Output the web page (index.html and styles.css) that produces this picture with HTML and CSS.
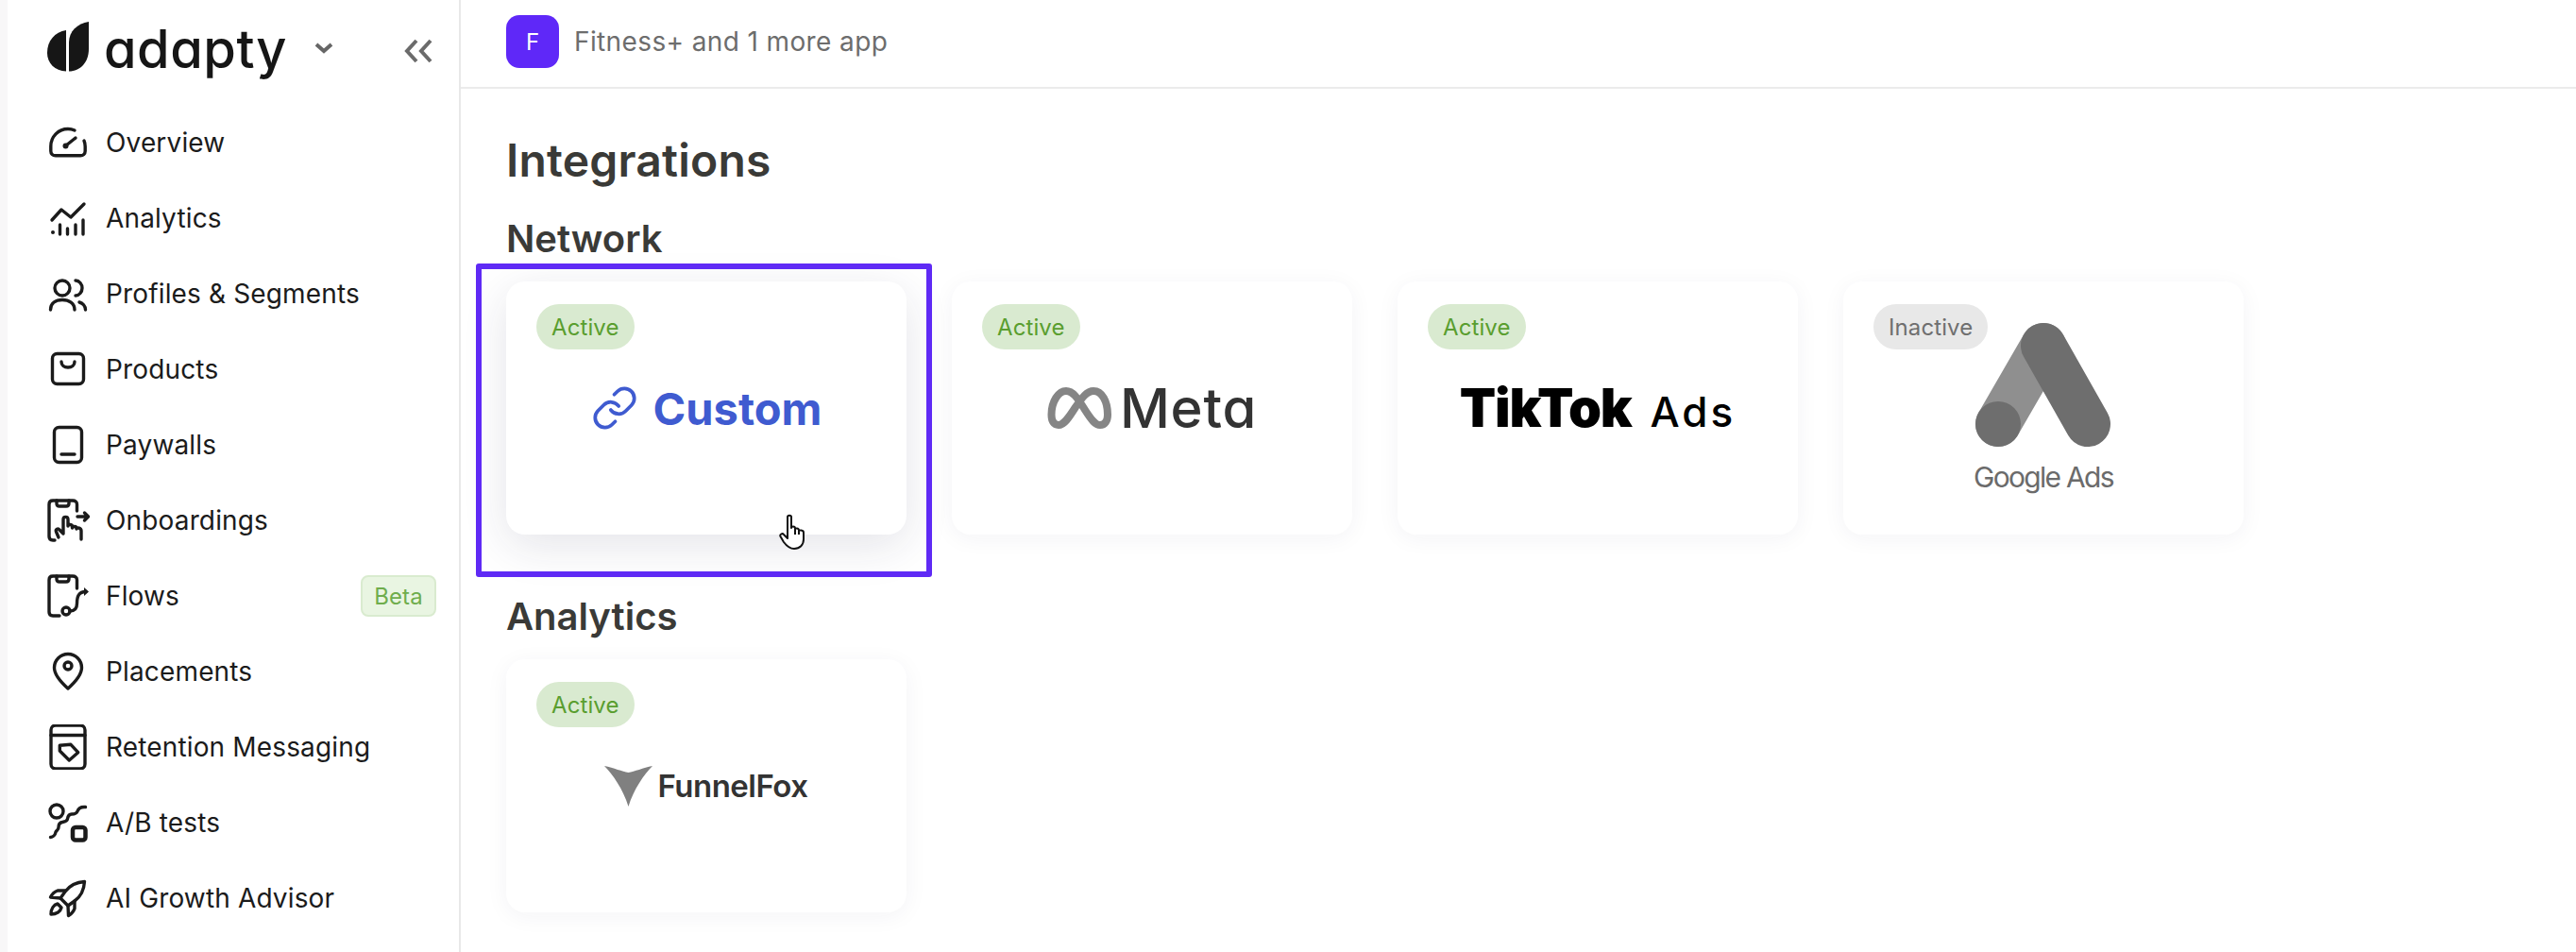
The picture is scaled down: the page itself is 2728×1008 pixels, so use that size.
FILE: index.html
```html
<!DOCTYPE html>
<html lang="en">
<head>
  <meta charset="UTF-8" />
  <title>Integrations</title>
  <link rel="stylesheet" href="styles.css">
</head>
<body>
  <!-- Sidebar -->
  <aside class="sidebar">
    <div class="brand">
      <svg class="brand-leaf" viewBox="0 0 44 53"><path d="M20 9C8 11 0 20 0 33C0 44 8 52 20 52.500Z"/><path d="M23 52.500C35 52.500 44 43 44 29V0C32 2 23 10 23 22Z"/></svg>
      <span class="brand-name">adapty</span>
      <svg class="brand-chevron" viewBox="0 0 20 12"><path d="M2 2L10 9L18 2"/></svg>
      <svg class="brand-collapse" viewBox="0 0 30 26"><path d="M13 2L3 13L13 24M28 2L18 13L28 24"/></svg>
    </div>
    <nav class="nav">
      <a class="nav-item">
        <svg class="nav-icon" viewBox="-4 -4 48 48"><path d="M27 7C24.800 6 22.500 5.500 20 5.500C9.800 5.500 1.800 13.800 1.800 24V29C1.800 31.800 4 33.800 6.800 33.800H33.200C36 33.800 38.200 31.800 38.200 29V24C38.200 21.800 37.800 19.800 37 18"/><path d="M18 23L28 15"/><circle class="solid" cx="17.500" cy="23.500" r="3"/></svg>
        Overview
      </a>
      <a class="nav-item">
        <svg class="nav-icon" viewBox="-4 -4 48 48"><path d="M3 22L13 11L23 19L37 5"/><path d="M11.500 27V37M19.500 31V37M28 27V37M36 22V37"/><circle class="solid" cx="4" cy="35" r="2"/></svg>
        Analytics
      </a>
      <a class="nav-item">
        <svg class="nav-icon" viewBox="-4 -4 48 48"><circle cx="14" cy="14" r="8"/><path d="M1.500 37C1.500 30 7 26.500 14 26.500S27 30 27 37"/><path d="M28 6C32 6 35 10 35 14S32 22 28 22"/><path d="M32 29C35.500 30 38.500 33 38.500 37"/></svg>
        Profiles &amp; Segments
      </a>
      <a class="nav-item">
        <svg class="nav-icon" viewBox="-4 -4 48 48"><rect x="3.500" y="3.500" width="33" height="32" rx="5"/><path d="M13 12C13 16 16 18 20 18S27 16 27 12"/></svg>
        Products
      </a>
      <a class="nav-item">
        <svg class="nav-icon" viewBox="-4 -4 48 48"><rect x="5.500" y="1.500" width="29" height="37" rx="5"/><path d="M13 30H27"/></svg>
        Paywalls
      </a>
      <a class="nav-item">
        <svg class="nav-icon" viewBox="-4 -4 48 48"><path d="M6 41H4C1.500 41 0 39.500 0 37V3C0 .5 1.500-1 4-1H25C27.500-1 29.500 .5 29.500 3V10"/><path d="M8-1V2C8 4 9 5 11 5H18C20 5 21 4 21 2V-1"/><path d="M30 16H41M37.500 12L41.500 16L37.500 20"/><path d="M10 38L7.500 32C6.500 29.500 9.500 28 11 30L15 34V19C15 15.500 20 15.500 20 19V26C20 24 24 24 24.500 26V28C25 26 29 26 29 28.500V29C30 27 34 28 34 31V40"/></svg>
        Onboardings
      </a>
      <a class="nav-item">
        <svg class="nav-icon" viewBox="-4 -4 48 48"><path d="M11 41H4C1.500 41 0 39.500 0 37V3C0 .5 1.500-1 4-1H25C27.500-1 29.500 .5 29.500 3V12"/><path d="M8-1V2C8 4 9 5 11 5H18C20 5 21 4 21 2V-1"/><circle cx="18" cy="36" r="4"/><path d="M22 36C27 36 29.500 33 29.500 28C29.500 21 31 15.500 39 15.500"/><path class="solid" d="M37 11L42 15.500L37 20Z"/></svg>
        Flows
        <span class="beta">Beta</span>
      </a>
      <a class="nav-item">
        <svg class="nav-icon" viewBox="-4 -4 48 48"><path d="M20 38C15 33.500 5.500 25 5.500 16C5.500 8 12 1.500 20 1.500S34.500 8 34.500 16C34.500 25 25 33.500 20 38Z"/><circle cx="20" cy="14" r="4"/></svg>
        Placements
      </a>
      <a class="nav-item">
        <svg class="nav-icon" viewBox="-4 -4 48 48"><rect x="2" y="-3" width="36" height="46" rx="5"/><path d="M2 7.500H38"/><path d="M11.300 18.300L23 17.300L30.700 25.700L21.300 34L11.300 24Z"/></svg>
        Retention Messaging
      </a>
      <a class="nav-item">
        <svg class="nav-icon" viewBox="-4 -4 48 48"><circle cx="8" cy="8" r="7"/><rect class="thick" x="25" y="25" width="13.500" height="13.500" rx="3"/><path d="M38.500 3.500C33 3 31 5 30 8C29 11 26 11 24 11C21 11 20 13 19.500 16C19 19 16 19 14 19.500C11 20 10 22 10 25C10 28 8 28 7 30C6.500 33 4 35.500 1.500 35.500"/></svg>
        A/B tests
      </a>
      <a class="nav-item">
        <svg class="nav-icon" viewBox="-4 -4 48 48"><path d="M37.500 2.500C29 3 22 6.500 17 13L12 20L20 28L27 23C34 18 37 11 37.500 2.500Z"/><path d="M17 12H9C6 13 3 16 1.500 19L12 20"/><path d="M27 23V31C26 34 23 37 20.500 38.500L20 28"/><path d="M9 26C5 27 2 31 2 37C8 37 12 34 13 30Z"/></svg>
        AI Growth Advisor
      </a>
    </nav>
  </aside>

  <div class="main">
    <!-- Topbar -->
    <header class="topbar">
      <span class="app-icon">F</span>
      <span class="app-name">Fitness+ and 1 more app</span>
    </header>

    <div class="content">
      <h1 class="title">Integrations</h1>

      <h2 class="section-title">Network</h2>
      <div class="cards">
        <div class="card card-hover">
          <span class="status">Active</span>
          <div class="logo-custom">
            <svg class="link-icon" viewBox="0 0 24 24"><path d="M10 13a5 5 0 0 0 7.540.54l3-3a5 5 0 0 0-7.070-7.070l-1.720 1.710"/><path d="M14 11a5 5 0 0 0-7.540-.54l-3 3a5 5 0 0 0 7.070 7.070l1.710-1.710"/></svg>
            Custom
          </div>
          <div class="highlight"></div>
          <svg class="cursor" viewBox="0 0 28 38"><path d="M9 3.500C9 1 13 1 13 3.500V15C13 13 17 13 17 15.500V16.500C17 15 21 15 21 17.500V18.500C21 17 26 17 26 20V27C26 33 22 37 16 37C11 37 8 34 5 30L1.500 24C.5 22 3.500 20 5 22L9 26Z"/><path d="M17 16.500V22M21 18.500V22"/></svg>
        </div>

        <div class="card">
          <span class="status">Active</span>
          <div class="logo-meta">
            <svg class="meta-icon" viewBox="0 0 68 44"><path d="M4.500 29C4.500 15 12 4 20 4C27 4 32 11 40 24C47 35 51 40 56 40C61 40 64 36 64 29C64 15 58 4 49 4C42 4 37 11 30 21C23 32 18 40 12 40C7 40 4.500 36 4.500 29Z"/></svg>
            <span class="meta-name">Meta</span>
          </div>
        </div>

        <div class="card">
          <span class="status">Active</span>
          <div class="logo-tiktok">TikTok <span class="tiktok-ads">Ads</span></div>
        </div>

        <div class="card">
          <span class="status status-off">Inactive</span>
          <div class="logo-google">
            <svg class="google-icon" viewBox="0 0 144 132"><path class="google-light" d="M72 24L24 107"/><path class="google-dark" d="M72 24L119 107"/><circle cx="24" cy="107" r="24"/></svg>
            <span class="google-name">Google Ads</span>
          </div>
        </div>
      </div>

      <h2 class="section-title">Analytics</h2>
      <div class="cards">
        <div class="card">
          <span class="status">Active</span>
          <div class="logo-funnel">
            <svg class="funnel-icon" viewBox="0 0 51 43"><path d="M0 0C10 2 19 6 25.500 7C32 6 41 2 51 0C42 9 31 25 25.500 43C20 25 9 9 0 0Z"/></svg>
            FunnelFox
          </div>
        </div>
      </div>
    </div>
  </div>
</body>
</html>
```

FILE: styles.css
```css
* {
  box-sizing: border-box;
}

html, body {
  height: 100%;
}

body {
  margin: 0;
  display: flex;
  overflow: hidden;
  background-color: #ffffff;
  color: #1b1b1b;
  font-family: 'Inter', 'Liberation Sans', sans-serif;
}

/* sidebar */
.sidebar {
  width: 488px;
  flex-shrink: 0;
  border-left: 8px solid #f8f7f8;
  border-right: 2px solid #e8e8e8;
  padding-left: 40px;
  padding-right: 24px;
}

.brand {
  height: 111px;
  display: flex;
  align-items: flex-start;
}

.brand-leaf {
  width: 44px;
  height: 53px;
  flex-shrink: 0;
  margin: 23px 0 0 2px;
  fill: #161616;
}

.brand-name {
  margin: 15px 0 0 16px;
  font-size: 56px;
  line-height: 75px;
  font-weight: 500;
  letter-spacing: 0.5px;
  font-feature-settings: 'cv11';
  color: #161616;
}

.brand-chevron {
  width: 20px;
  height: 12px;
  flex-shrink: 0;
  margin: 45px 0 0 29px;
  fill: none;
  stroke: #666666;
  stroke-width: 4;
}

.brand-collapse {
  width: 30px;
  height: 26px;
  flex-shrink: 0;
  margin: 41px 0 0 75px;
  fill: none;
  stroke: #6b6b6b;
  stroke-width: 4;
}

.nav {
  display: flex;
  flex-direction: column;
}

.nav-item {
  height: 80px;
  display: flex;
  align-items: center;
  gap: 16px;
  font-size: 28px;
  letter-spacing: 0.15px;
}

.nav-icon {
  width: 48px;
  height: 48px;
  flex-shrink: 0;
  fill: none;
  stroke: #1b1b1b;
  stroke-width: 3.400;
  stroke-linecap: round;
  stroke-linejoin: round;
}

.nav-icon .solid {
  fill: #1b1b1b;
  stroke: none;
}

.nav-icon .thick {
  stroke-width: 4.500;
}

.beta {
  margin-left: auto;
  height: 44px;
  width: 80px;
  display: flex;
  align-items: center;
  justify-content: center;
  border: 2px solid #d9ebcf;
  border-radius: 8px;
  background-color: #e9f5e2;
  color: #6fad4d;
  font-size: 24px;
}

/* main column */
.main {
  flex: 1;
}

.topbar {
  height: 94px;
  display: flex;
  align-items: center;
  gap: 16px;
  padding: 0 48px 4px;
  border-bottom: 2px solid #ebebeb;
}

.app-icon {
  width: 56px;
  height: 56px;
  display: flex;
  align-items: center;
  justify-content: center;
  border-radius: 14px;
  background-color: #5f28f8;
  color: white;
  font-size: 24px;
}

.app-name {
  color: #6d6d6d;
  font-size: 28px;
  letter-spacing: 0.38px;
}

.content {
  padding: 48px 48px 0;
  color: #3a3a37;
}

.title {
  margin: 0 0 31px;
  font-size: 48px;
  line-height: 56px;
  font-weight: 600;
  letter-spacing: 0.2px;
}

.section-title {
  margin: 0 0 21px;
  font-size: 40px;
  line-height: 48px;
  font-weight: 600;
}

.cards {
  display: flex;
  gap: 48px;
  margin-bottom: 63px;
}

.card {
  position: relative;
  width: 424px;
  height: 268px;
  display: flex;
  align-items: center;
  justify-content: center;
  border-radius: 20px;
  background-color: white;
  box-shadow: 0 4px 24px rgba(30, 30, 70, 0.05);
}

.card-hover {
  box-shadow: 0 12px 48px rgba(30, 30, 70, 0.12);
}

.status {
  position: absolute;
  top: 24px;
  left: 32px;
  height: 48px;
  display: flex;
  align-items: center;
  padding: 0 16px;
  border-radius: 24px;
  background-color: #d9ead0;
  color: #5a9e2f;
  font-size: 24px;
  letter-spacing: 0.1px;
}

.status-off {
  background-color: #e8e8e8;
  color: #6f6f6f;
}

/* purple box round the first card */
.highlight {
  position: absolute;
  top: -19px;
  left: -32px;
  right: -27px;
  bottom: -45px;
  border: 6px solid #5f2af5;
  border-radius: 3px;
}

.cursor {
  position: absolute;
  left: 289px;
  top: 246px;
  width: 28px;
  height: 38px;
  fill: white;
  stroke: #111111;
  stroke-width: 2;
  stroke-linejoin: round;
}

/* logos */
.logo-custom {
  display: flex;
  align-items: center;
  gap: 16px;
  color: #3f5bd0;
  font-size: 47px;
  font-weight: 700;
}

.link-icon {
  width: 50px;
  height: 50px;
  fill: none;
  stroke: #3f5bd0;
  stroke-width: 1.800;
  stroke-linecap: round;
  stroke-linejoin: round;
}

.logo-meta {
  display: flex;
  align-items: center;
  gap: 9px;
}

.meta-icon {
  width: 68px;
  height: 44px;
  fill: none;
  stroke: #858585;
  stroke-width: 8;
}

.meta-name {
  color: #333333;
  font-size: 58px;
  line-height: 56px;
  font-weight: 500;
  letter-spacing: 0.8px;
  font-feature-settings: 'cv11';
}

.logo-tiktok {
  color: #000000;
  font-size: 56px;
  font-weight: 900;
  letter-spacing: -1.2px;
  white-space: pre;
}

.tiktok-ads {
  margin-left: 10px;
  font-size: 44px;
  font-weight: 500;
  letter-spacing: 3px;
}

.logo-google {
  display: flex;
  flex-direction: column;
  align-items: center;
  gap: 14px;
}

.google-icon {
  width: 144px;
  height: 132px;
  fill: #6e6e6e;
  stroke-width: 48;
  stroke-linecap: round;
}

.google-light {
  stroke: #8f8f8f;
}

.google-dark {
  stroke: #6e6e6e;
}

.google-name {
  color: #6b6b6b;
  font-size: 30px;
  line-height: 34px;
  letter-spacing: -1.7px;
}

.logo-funnel {
  display: flex;
  align-items: center;
  gap: 5px;
  color: #333333;
  font-size: 33px;
  font-weight: 600;
  letter-spacing: -0.5px;
}

.funnel-icon {
  width: 51px;
  height: 43px;
  fill: #808080;
}
```
